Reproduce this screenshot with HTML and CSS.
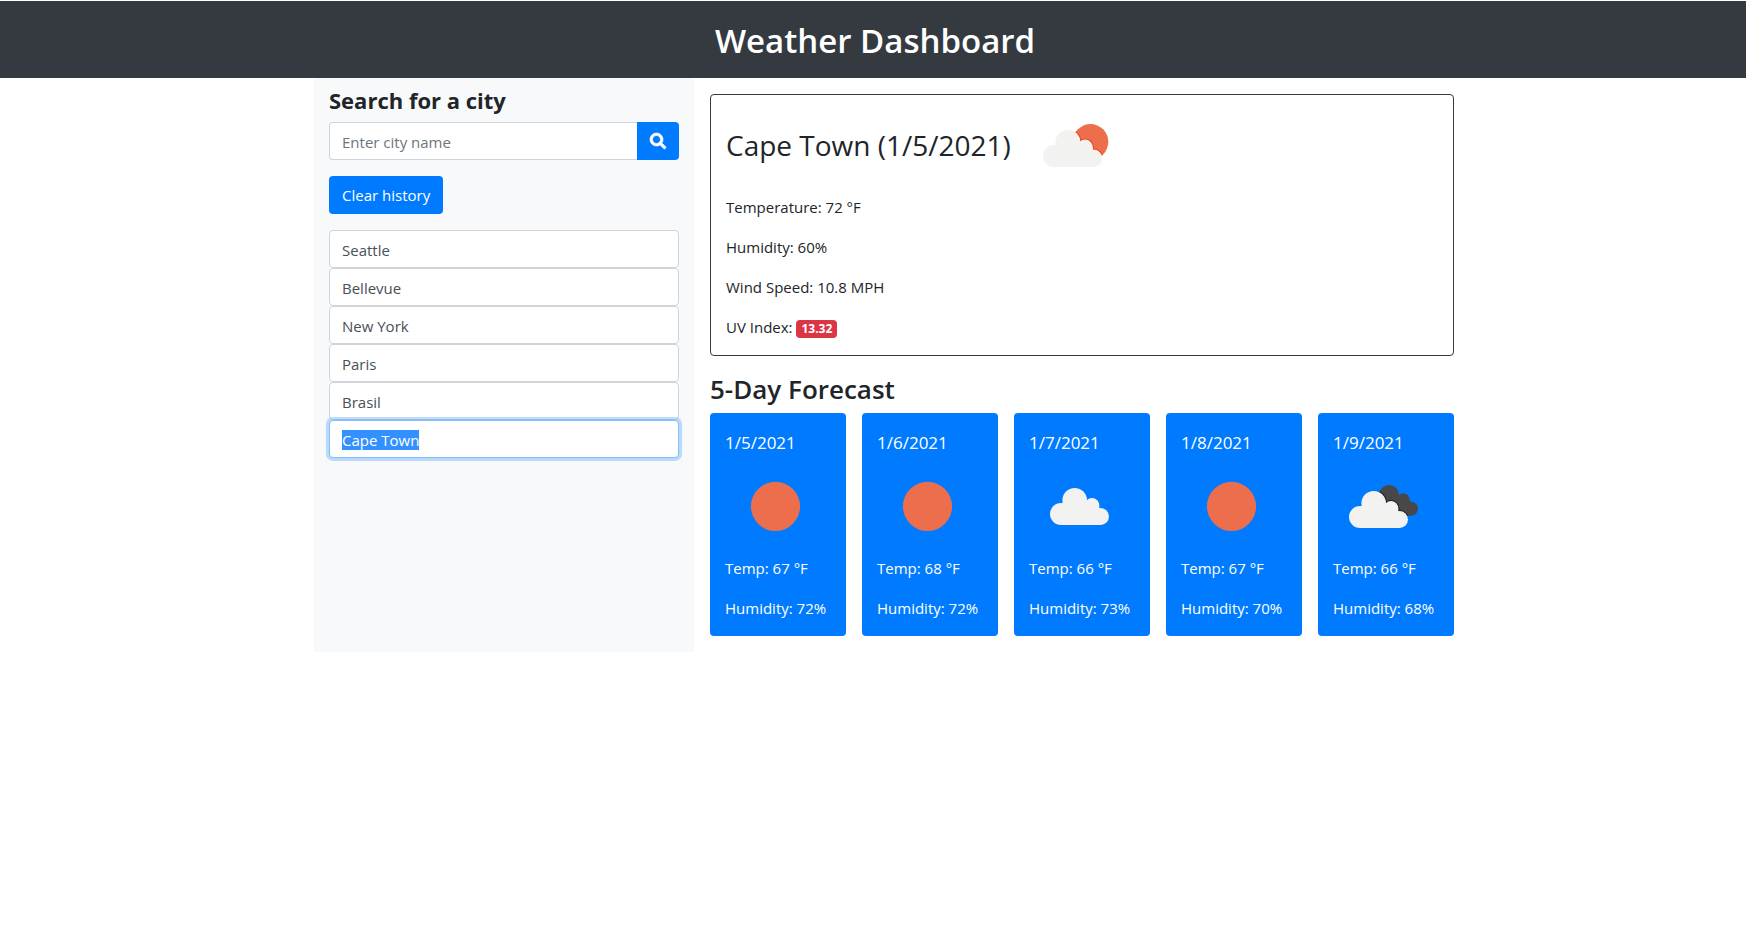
FILE: index.html
```html
<!DOCTYPE html>
<html lang="en">
<head>
<meta charset="utf-8">
<meta name="viewport" content="width=device-width, initial-scale=1">
<title>Weather Dashboard</title>
<link rel="stylesheet" href="styles.css">
</head>
<body>
<svg class="sprite" aria-hidden="true">
  <defs>
    <g id="cloud">
      <circle cx="24.7" cy="12.2" r="12.3"/>
      <circle cx="11" cy="26" r="11"/>
      <circle cx="42" cy="17.3" r="7.3"/>
      <circle cx="50.5" cy="28.5" r="8.5"/>
      <path d="M12.4 14.8H37L49.3 18V21L50.5 28V37H11V26Z"/>
    </g>
    <g id="back-cloud">
      <circle cx="55" cy="39.3" r="10.3"/>
      <circle cx="69.3" cy="43.7" r="6.4"/>
      <circle cx="77" cy="52.7" r="7.1"/>
      <path d="M50 42H66L75.6 44L77 52V59.8H50Z"/>
    </g>
    <clipPath id="sun-clip"><circle cx="62.5" cy="46.9" r="17.8"/></clipPath>
    <clipPath id="back-clip">
      <circle cx="55" cy="39.3" r="10.3"/>
      <circle cx="69.3" cy="43.7" r="6.4"/>
      <circle cx="77" cy="52.7" r="7.1"/>
      <path d="M50 42H66L75.6 44L77 52V59.8H50Z"/>
    </clipPath>
    <symbol id="clear" viewBox="0 0 100 100"><circle class="sun" cx="50.5" cy="50.4" r="24.6"/></symbol>
    <symbol id="cloudy" viewBox="0 0 100 100"><use class="cloud" href="#cloud" x="21" y="32"/></symbol>
    <symbol id="partly" viewBox="0 0 100 100">
      <circle class="sun" cx="62.5" cy="46.9" r="17.8"/>
      <g clip-path="url(#sun-clip)">
        <use class="sun-shade" href="#cloud" x="15" y="35"/>
        <use class="cloud-edge" href="#cloud" x="15" y="35"/>
      </g>
      <use class="cloud" href="#cloud" x="15" y="35"/>
    </symbol>
    <symbol id="broken" viewBox="-1 0 100 100">
      <use class="back" href="#back-cloud"/>
      <g clip-path="url(#back-clip)"><use class="back-shade" href="#cloud" x="15" y="35"/></g>
      <use class="cloud" href="#cloud" x="15" y="35"/>
    </symbol>
  </defs>
</svg>

<header class="banner"><h1>Weather Dashboard</h1></header>

<main class="layout">
  <aside class="sidebar">
    <form class="search">
      <label class="search-title" for="city">Search for a city</label>
      <div class="search-group">
        <input class="field" id="city" type="text" placeholder="Enter city name">
        <button class="button search-button" type="button" aria-label="Search">
          <svg viewBox="0 0 512 512" width="16" height="16" aria-hidden="true"><path fill="currentColor" stroke="currentColor" stroke-width="20" d="M505 442.700L405.300 343c-4.500-4.500-10.600-7-17-7H372c27.600-35.300 44-79.700 44-128C416 93.100 322.900 0 208 0S0 93.100 0 208s93.100 208 208 208c48.300 0 92.700-16.400 128-44v16.300c0 6.400 2.500 12.500 7 17l99.700 99.700c9.400 9.400 24.600 9.400 33.900 0l28.300-28.300c9.400-9.400 9.400-24.600.1-34zM208 336c-70.700 0-128-57.200-128-128 0-70.700 57.200-128 128-128 70.700 0 128 57.200 128 128 0 70.700-57.200 128-128 128z"/></svg>
        </button>
      </div>
      <button class="button" type="button">Clear history</button>
    </form>
    <div class="history">
      <input class="field" type="text" readonly aria-label="Past search" value="Seattle">
      <input class="field" type="text" readonly aria-label="Past search" value="Bellevue">
      <input class="field" type="text" readonly aria-label="Past search" value="New York">
      <input class="field" type="text" readonly aria-label="Past search" value="Paris">
      <input class="field" type="text" readonly aria-label="Past search" value="Brasil">
      <input class="field" id="current" type="text" readonly aria-label="Past search" value="Cape Town">
    </div>
  </aside>

  <div class="content">
    <section class="today">
      <div class="today-head">
        <h2>Cape Town (1/5/2021)</h2>
        <svg class="icon" role="img" aria-label="Partly cloudy"><use href="#partly"/></svg>
      </div>
      <div class="facts">
        <p>Temperature: 72 °F</p>
        <p>Humidity: 60%</p>
        <p>Wind Speed: 10.8 MPH</p>
        <p>UV Index: <span class="badge">13.32</span></p>
      </div>
    </section>

    <section class="forecast">
      <h2>5-Day Forecast</h2>
      <div class="days">
        <article class="day"><h3>1/5/2021</h3><svg class="icon" role="img" aria-label="Clear"><use href="#clear"/></svg><div class="facts"><p>Temp: 67 °F</p><p>Humidity: 72%</p></div></article>
        <article class="day"><h3>1/6/2021</h3><svg class="icon" role="img" aria-label="Clear"><use href="#clear"/></svg><div class="facts"><p>Temp: 68 °F</p><p>Humidity: 72%</p></div></article>
        <article class="day"><h3>1/7/2021</h3><svg class="icon" role="img" aria-label="Cloudy"><use href="#cloudy"/></svg><div class="facts"><p>Temp: 66 °F</p><p>Humidity: 73%</p></div></article>
        <article class="day"><h3>1/8/2021</h3><svg class="icon" role="img" aria-label="Clear"><use href="#clear"/></svg><div class="facts"><p>Temp: 67 °F</p><p>Humidity: 70%</p></div></article>
        <article class="day"><h3>1/9/2021</h3><svg class="icon" role="img" aria-label="Broken clouds"><use href="#broken"/></svg><div class="facts"><p>Temp: 66 °F</p><p>Humidity: 68%</p></div></article>
      </div>
    </section>
  </div>
</main>
<script src="script.js"></script>
</body>
</html>
```
FILE: styles.css
```css
* { box-sizing: border-box; }

body {
  margin: 0;
  padding-top: 1px;
  background: #fff;
  color: #212529;
  font: 400 15px/24px "Open Sans", "Noto Sans", sans-serif;
}

h1, h2, h3, p { margin: 0; }

.sprite { position: absolute; width: 0; height: 0; }

.banner {
  padding: 16px 16px 13px 20px;
  background: #343a40;
  color: #fff;
  text-align: center;
}
.banner h1 { font-size: 33px; line-height: 48px; font-weight: 600; }

.layout {
  display: grid;
  grid-template-columns: 380px 1fr;
  max-width: 1194px;
  margin: 0 auto;
  padding: 0 16px 0 38px;
}

.sidebar { padding: 8px 15px 16px; background: #f8f9fa; }

.search-title {
  display: block;
  margin-bottom: 8px;
  font-size: 22px;
  line-height: 28px;
  font-weight: 700;
}
.search-group { display: flex; margin-bottom: 16px; }
.search-group .field { flex: 1; min-width: 0; border-radius: 4px 0 0 4px; border-right: 0; }
.search-group .search-button { border-radius: 0 4px 4px 0; }

.field {
  display: block;
  width: 100%;
  height: 38px;
  padding: 7px 12px 5px;
  border: 1px solid #ced4da;
  border-radius: 4px;
  background: #fff;
  color: #495057;
  font: inherit;
}
.field::placeholder { color: #6c757d; opacity: 1; }
.field:focus {
  position: relative;
  border-color: #80bdff;
  outline: 0;
  box-shadow: 0 0 0 3px rgba(0, 123, 255, .25);
}
.field::selection { background: #3390ff; color: #fff; }

.button {
  height: 38px;
  padding: 6px 13px;
  border: 0;
  border-radius: 4px;
  background: #007bff;
  color: #fff;
  font: inherit;
}
.button svg { display: block; overflow: visible; }

.history { margin-top: 16px; }

.content { padding: 16px 0 16px 16px; }

.today {
  padding: 0 15px 16px;
  border: 1px solid #343a40;
  border-radius: 4px;
}
.today-head { display: flex; align-items: center; gap: 17px; }
.today h2 { font-size: 28px; line-height: 36px; font-weight: 400; }

.icon { display: block; width: 100px; height: 100px; flex: none; }

.facts { display: grid; gap: 16px; }

.badge {
  display: inline-block;
  padding: 3px 5px;
  border-radius: 4px;
  background: #dc3545;
  color: #fff;
  font-size: 12px;
  line-height: 12px;
  font-weight: 700;
}

.forecast { margin-top: 17px; }
.forecast h2 { margin-bottom: 7px; font-size: 26px; line-height: 33px; font-weight: 600; }

.days { display: grid; grid-template-columns: repeat(5, 1fr); gap: 16px; }
.day {
  padding: 16px 15px;
  border-radius: 4px;
  background: #007bff;
  color: #fff;
  white-space: nowrap;
}
.day h3 { font-size: 17px; line-height: 27px; font-weight: 400; }

.sun { fill: #ec6e4c; }
.cloud { fill: #f2f2f0; }
.sun-shade { fill: none; stroke: #e8481e; stroke-width: 3px; }
.cloud-edge { fill: #fbe9e2; stroke: #fbe9e2; stroke-width: 1px; }
.back { fill: #48484a; }
.back-shade { fill: none; stroke: #1f1f24; stroke-width: 2px; }
```
FILE: script.js
```js
const current = document.getElementById("current");
current.focus();
current.select();
```
